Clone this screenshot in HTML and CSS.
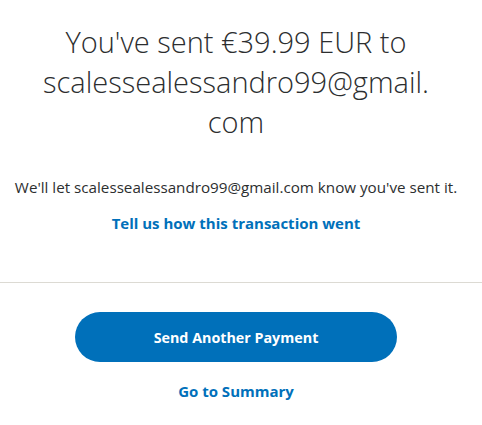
FILE: index.html
```html
<!DOCTYPE html>
<html lang="en">
<head>
<meta charset="utf-8">
<title>Payment sent</title>
<link rel="stylesheet" href="styles.css">
</head>
<body>
<main class="page">
  <section class="summary">
    <h1 class="title">You've sent €39.99 EUR to scalessealessandro99@gmail.<wbr>com</h1>
    <p class="note">We'll let scalessealessandro99@gmail.com know you've sent it.</p>
    <a class="link feedback" href="#">Tell us how this transaction went</a>
  </section>
  <hr class="divider">
  <section class="actions">
    <a class="button" href="#">Send Another Payment</a>
    <a class="link summary-link" href="#">Go to Summary</a>
  </section>
</main>
</body>
</html>
```

FILE: styles.css
```css
html, body {
  margin: 0;
  padding: 0;
  background: #ffffff;
}

body {
  font-family: "Open Sans", "Noto Sans", sans-serif;
  color: #2c2e2f;
}

.page {
  display: flex;
  flex-direction: column;
}

.summary {
  width: 472px;
  display: flex;
  flex-direction: column;
  align-items: center;
  text-align: center;
}

.title {
  margin: 22px 0 0;
  width: 420px;
  font-size: 29px;
  line-height: 40px;
  font-weight: 300;
  color: #2c2e2f;
}

.note {
  margin: 35px 0 0;
  font-size: 15.2px;
  line-height: 20px;
  white-space: nowrap;
}

.link {
  color: #0070ba;
  font-weight: 700;
  font-size: 15px;
  line-height: 20px;
  text-decoration: none;
}

.feedback {
  margin-top: 16px;
}

.divider {
  margin: 49px 0 0;
  border: 0;
  border-top: 1px solid #dcdad3;
  width: 100%;
}

.actions {
  width: 472px;
  display: flex;
  flex-direction: column;
  align-items: center;
}

.button {
  margin-top: 29px;
  width: 322px;
  height: 50px;
  border-radius: 25px;
  background: #0070ba;
  color: #ffffff;
  font-weight: 700;
  font-size: 14.3px;
  display: flex;
  align-items: center;
  justify-content: center;
  text-decoration: none;
}

.summary-link {
  margin-top: 19px;
}
```
